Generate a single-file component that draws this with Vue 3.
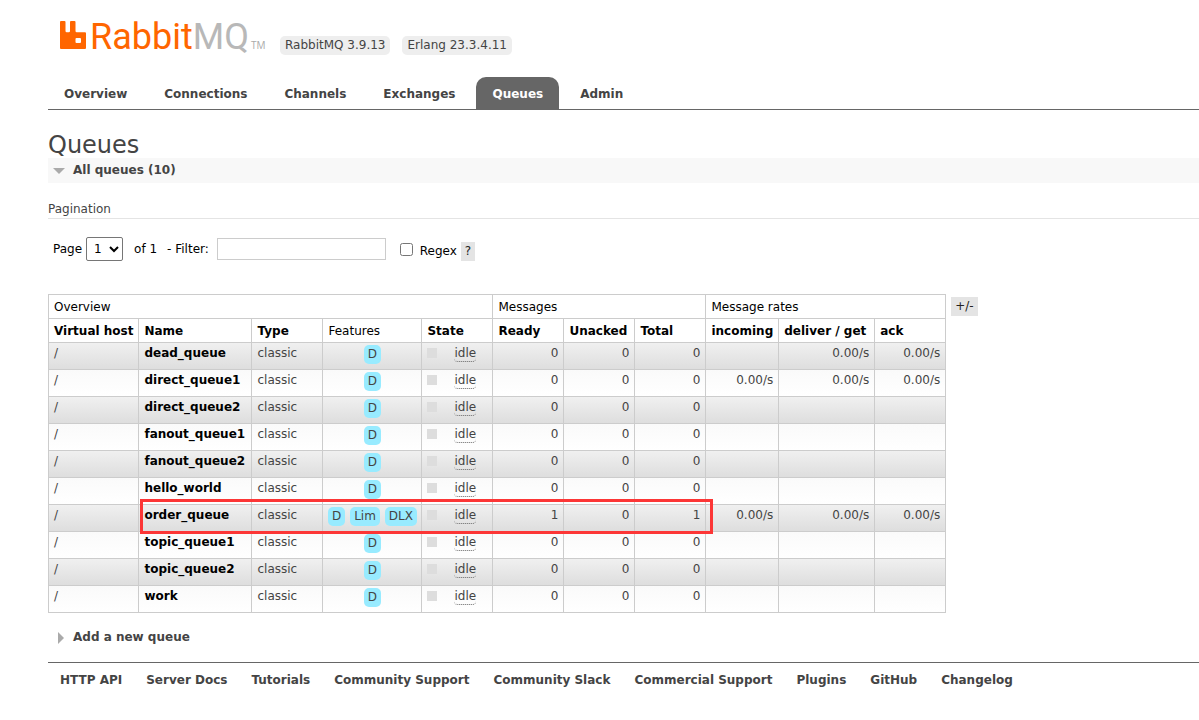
<script setup>
import { ref } from 'vue'

const tabs = ['Overview', 'Connections', 'Channels', 'Exchanges', 'Queues', 'Admin']
const active = 'Queues'
const page = ref('1')
const filter = ref('')
const regex = ref(false)

const rate = '0.00/s'
const queue = (name, extra = {}) => ({
  name, features: ['D'], ready: 0, unacked: 0, total: 0, incoming: '', deliver: '', ack: '', ...extra,
})
const queues = [
  queue('dead_queue', { deliver: rate, ack: rate }),
  queue('direct_queue1', { incoming: rate, deliver: rate, ack: rate }),
  queue('direct_queue2'),
  queue('fanout_queue1'),
  queue('fanout_queue2'),
  queue('hello_world'),
  queue('order_queue', {
    features: ['D', 'Lim', 'DLX'], ready: 1, total: 1, incoming: rate, deliver: rate, ack: rate,
  }),
  queue('topic_queue1'),
  queue('topic_queue2'),
  queue('work'),
]
const links = [
  'HTTP API', 'Server Docs', 'Tutorials', 'Community Support', 'Community Slack',
  'Commercial Support', 'Plugins', 'GitHub', 'Changelog',
]
</script>

<template>
  <div class="page">
    <header>
      <div class="brand">
        <a href="#" class="logo" aria-label="RabbitMQ">
          <svg class="mark" viewBox="0 0 26 28" aria-hidden="true">
            <path
              fill="#f60" fill-rule="evenodd"
              d="M1 0h3.500q1 0 1 1v9q0 1.200 1.200 1.200h2.100q1.200 0 1.200-1.200V1q0-1 1-1H14.500q1 0 1 1v9q0 1.200 1.200 1.200h8.300q1 0 1 1V27q0 1-1 1H1q-1 0-1-1V1q0-1 1-1zM16.500 17q-1 0-1 1v3q0 1 1 1h3.500q1 0 1-1v-3q0-1-1-1z"
            />
          </svg>
          <span class="word">Rabbit<span class="mq">MQ</span></span>
          <span class="tm">TM</span>
        </a>
        <span class="version">RabbitMQ 3.9.13</span>
        <span class="version">Erlang 23.3.4.11</span>
      </div>
      <nav class="tabs">
        <a v-for="t in tabs" :key="t" href="#" :class="{ selected: t === active }">{{ t }}</a>
      </nav>
    </header>

    <main>
      <h1>Queues</h1>
      <h2 class="section open">
        <svg class="down" viewBox="0 0 12 6" aria-hidden="true"><path d="M0 0h12L6 6z" fill="#aaa" /></svg>
        All queues (10)
      </h2>
      <h3>Pagination</h3>

      <form class="filters" @submit.prevent>
        <label for="page">Page</label>
        <select id="page" v-model="page"><option>1</option></select>
        <span class="of">of 1</span>
        <label class="filter-label" for="filter">- Filter:</label>
        <input id="filter" v-model="filter" type="text" class="filter">
        <div class="regex">
          <input id="regex" v-model="regex" type="checkbox">
          <label for="regex">Regex</label>
          <button type="button" class="help">?</button>
        </div>
      </form>

      <div class="listing">
        <div class="table-wrap">
          <table>
            <colgroup>
              <col class="c-host"><col class="c-name"><col class="c-std"><col class="c-features">
              <col class="c-std"><col class="c-std"><col class="c-std"><col class="c-std">
              <col class="c-incoming"><col class="c-deliver"><col class="c-std">
            </colgroup>
            <thead>
              <tr>
                <th class="plain" colspan="5">Overview</th>
                <th class="plain" colspan="3">Messages</th>
                <th class="plain" colspan="3">Message rates</th>
              </tr>
              <tr>
                <th>Virtual host</th><th>Name</th><th>Type</th><th class="plain">Features</th><th>State</th>
                <th>Ready</th><th>Unacked</th><th>Total</th>
                <th>incoming</th><th>deliver / get</th><th>ack</th>
              </tr>
            </thead>
            <tbody>
              <tr v-for="q in queues" :key="q.name">
                <td>/</td>
                <td class="name"><a href="#">{{ q.name }}</a></td>
                <td>classic</td>
                <td class="features">
                  <div class="badges"><abbr v-for="f in q.features" :key="f">{{ f }}</abbr></div>
                </td>
                <td><div class="state"><i></i><span>idle</span></div></td>
                <td class="num">{{ q.ready }}</td>
                <td class="num">{{ q.unacked }}</td>
                <td class="num">{{ q.total }}</td>
                <td class="num">{{ q.incoming }}</td>
                <td class="num">{{ q.deliver }}</td>
                <td class="num">{{ q.ack }}</td>
              </tr>
            </tbody>
          </table>
          <div class="highlight"></div>
        </div>
        <button type="button" class="columns">+/-</button>
      </div>

      <h2 class="section">
        <svg class="right" viewBox="0 0 6 12" aria-hidden="true"><path d="M0 0v12L6 6z" fill="#aaa" /></svg>
        Add a new queue
      </h2>
    </main>

    <footer>
      <a v-for="l in links" :key="l" href="#">{{ l }}</a>
    </footer>
  </div>
</template>

<style>
body { margin: 0; background: #fff; }
</style>

<style scoped>
.page {
  padding: 20px 0 0 48px;
  font: 12px/15px Verdana, "DejaVu Sans", sans-serif;
  color: #444;
  overflow: hidden;
}
a { color: inherit; text-decoration: none; }
.brand { display: flex; height: 57px; padding-left: 12px; box-sizing: border-box; }
.logo { display: flex; width: 208px; margin-right: 12px; }
.mark { width: 26px; height: 28px; margin: 1px 4px 0 0; flex: none; }
.word { font: 36px/34px Roboto, sans-serif; color: #f60; }
.mq { color: #b8b8b8; }
.tm { font: 10px/14px "Open Sans", sans-serif; color: #aaa; margin: 18px 0 0 2px; }
.version {
  align-self: flex-start;
  margin: 16px 12px 0 0;
  padding: 2px 5px;
  border-radius: 5px;
  background: #eee;
  white-space: nowrap;
}
.tabs { display: flex; gap: 5px; border-bottom: 1px solid #666; }
.tabs a { padding: 10px 16px 7px; font-weight: bold; border-radius: 10px 10px 0 0; }
.tabs .selected { background: #666; color: #fff; }

h1 { margin: 20px 0 0; font-size: 24px; line-height: 28px; padding-top: 1px; margin-bottom: -1px; font-weight: normal; }
.section { display: flex; align-items: center; margin: 0; padding: 5px 0 5px 5px; font-size: 12px; line-height: 15px; }
.open { background: #f8f8f8; }
.down { width: 12px; height: 6px; margin-right: 8px; }
.right { width: 6px; height: 12px; margin: 0 9px 0 5px; }
h3 { margin: 19px 0 18px; padding-bottom: 1px; font-size: 12px; font-weight: normal; border-bottom: 1px solid #e4e4e4; }

.filters { display: flex; align-items: center; padding-left: 5px; color: #000; margin-bottom: 33px; }
.filters select {
  width: 37px;
  height: 24px;
  margin: 0 11px 0 4px;
  padding: 0 0 0 3px;
  font: 12px "DejaVu Sans", sans-serif;
  color: #000;
  background: #fff;
  border: 1px solid #767676;
  border-radius: 2px;
}
.of { margin-right: 10px; }
.filter-label { margin-right: 8px; }
.filter { width: 169px; height: 22px; box-sizing: border-box; border: 1px solid #ccc; padding: 2px 4px; font: inherit; }
.regex { display: flex; align-items: center; margin-left: 14px; padding-top: 4px; }
.regex input { width: 13px; height: 13px; margin: 0 7px 4px 0; }
button { border: 0; background: #e4e4e4; color: #222; font: inherit; padding: 2px 4px; }
.help { margin-left: 4px; }

.listing { display: flex; align-items: flex-start; gap: 5px; margin-bottom: 12px; }
.table-wrap { position: relative; }
table { border-collapse: collapse; }
.c-host { width: 90px; }
.c-name { width: 113px; }
.c-std { width: 71px; }
.c-features { width: 99px; }
.c-incoming { width: 72px; }
.c-deliver { width: 96px; }
th, td { border: 1px solid #ccc; white-space: nowrap; }
th { padding: 5px 5px 3px; text-align: left; color: #000; }
.plain { font-weight: normal; }
td { padding: 3px 5px; height: 20px; vertical-align: top; }
td.features { padding: 2px 4px 4px; }
tbody tr { background: linear-gradient(#fafafa, #fff); }
tbody tr:nth-child(odd) { background: linear-gradient(#f0f0f0, #ddd); }
.name { font-weight: bold; color: #000; }
.badges { display: flex; justify-content: center; gap: 5px; }
abbr { padding: 2px 4px; border-radius: 5px; background: #98ebff; }
.state { display: flex; align-items: flex-start; }
.state i { width: 10px; height: 10px; margin: 2px 17px 0 0; background: #ddd; }
.state span { border-bottom: 1px dotted #666; border-radius: 4px; }
.num { text-align: right; }
.highlight {
  position: absolute;
  left: 92px;
  top: 205px;
  width: 573px;
  height: 35px;
  box-sizing: border-box;
  border: 3px solid #fc3636;
  pointer-events: none;
}
.columns { margin-top: 3px; }

footer { display: flex; gap: 24px; margin-top: 12px; padding: 10px 12px; border-top: 1px solid #666; font-weight: bold; white-space: nowrap; }
</style>
